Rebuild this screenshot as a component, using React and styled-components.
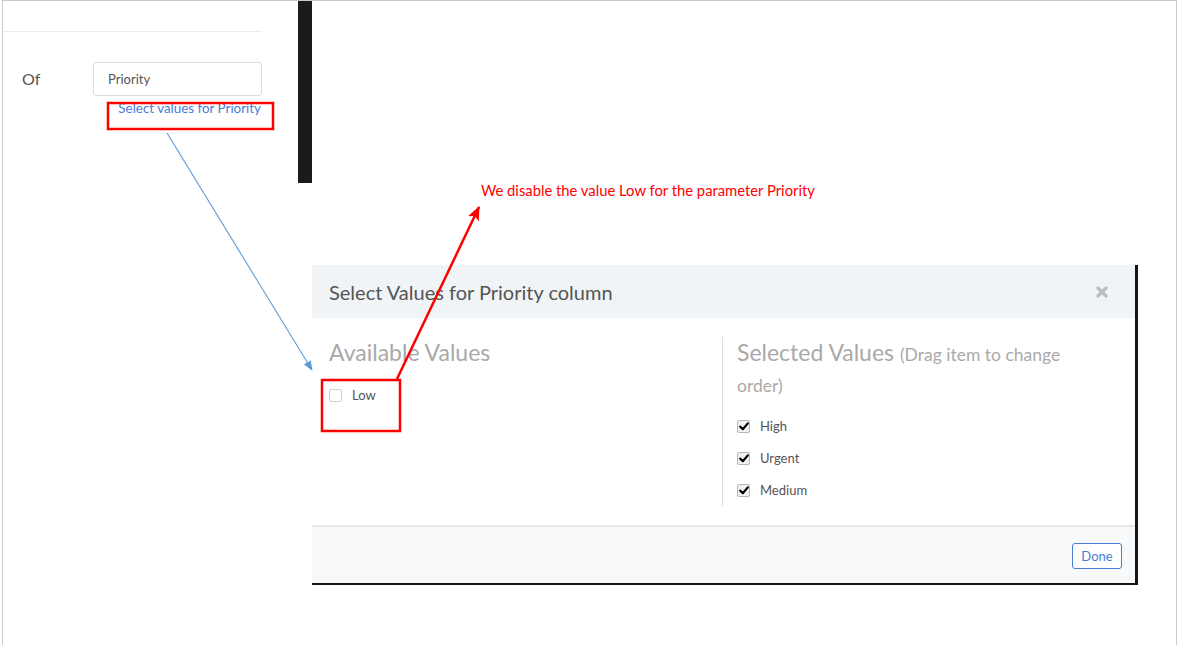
import React from "react";
import styled, { createGlobalStyle } from "styled-components";

const Global = createGlobalStyle`
  html, body { margin: 0; padding: 0; background: #fff; }
  body { font-family: Lato, "Noto Sans", sans-serif; }
  * { box-sizing: border-box; }
`;

const Page = styled.div`
  position: relative;
  width: 1179px;
  height: 645px;
  overflow: hidden;
  background: #fff;
`;

const Frame = styled.div`
  margin-left: 2px;
  width: 1175px;
  height: 645px;
  border: 1px solid #c9c9c9;
  border-bottom: none;
  display: flex;
  flex-direction: column;
`;

const TopRow = styled.div`
  display: flex;
  height: 182px;
`;

const LeftPanel = styled.div`
  width: 295px;
  display: flex;
  flex-direction: column;
`;

const TopRule = styled.div`
  width: 259px;
  height: 31px;
  border-bottom: 1px solid #ececec;
`;

const FieldRow = styled.div`
  display: flex;
  align-items: flex-start;
  margin-top: 30px;
  padding-left: 19px;
`;

const FieldLabel = styled.span`
  width: 71px;
  font-size: 16px;
  line-height: 33px;
  color: #555;
`;

const FieldColumn = styled.div`
  display: flex;
  flex-direction: column;
  width: 169px;
`;

const TextInput = styled.div`
  height: 34px;
  border: 1px solid #dcdcdc;
  border-radius: 3px;
  padding-left: 14px;
  display: flex;
  align-items: center;
  font-size: 13px;
  color: #555;
`;

const FieldLink = styled.a`
  margin-top: 4px;
  align-self: flex-end;
  padding-right: 1px;
  font-size: 13.4px;
  color: #4a7bd6;
  text-decoration: none;
`;

const BlackBar = styled.div`
  width: 14px;
  height: 182px;
  background: #1b1b1b;
`;

const Modal = styled.div`
  margin-top: 82px;
  margin-left: 309px;
  width: 826px;
  display: flex;
  flex-direction: column;
  background: #fff;
  border-right: 3px solid #141414;
  border-bottom: 2px solid #141414;
`;

const ModalHeader = styled.div`
  height: 53px;
  background: #f0f4f7;
  display: flex;
  align-items: center;
  justify-content: space-between;
  padding: 0 27px 0 17px;
`;

const ModalTitle = styled.span`
  font-size: 20px;
  color: #555;
`;

const CloseIcon = styled.svg`
  width: 12px;
  height: 12px;
`;

const ModalBody = styled.div`
  display: flex;
  padding: 19px 0 19px 0;
`;

const Column = styled.div`
  display: flex;
  flex-direction: column;
  width: ${(p) => p.$w};
  padding-left: ${(p) => p.$pad};
  border-left: ${(p) => (p.$divider ? "1px solid #dedede" : "none")};
`;

const ColumnHeading = styled.div`
  font-size: 23px;
  line-height: 31px;
  color: #a9a9a9;
  max-width: 345px;
  margin-bottom: 11px;
`;

const HeadingNote = styled.span`
  font-size: 17.5px;
  line-height: 1;
`;

const ItemRow = styled.label`
  display: flex;
  align-items: center;
  height: 32px;
  gap: 10px;
  font-size: 13px;
  color: #555;
`;

const Box = styled.span`
  width: 13px;
  height: 13px;
  border: 1px solid ${(p) => (p.$checked ? "#b5b5b5" : "#d0d0d0")};
  border-radius: 2px;
  background: ${(p) => (p.$checked ? "#f2f2f2" : "#fff")};
  display: flex;
  align-items: center;
  justify-content: center;
`;

const ModalFooter = styled.div`
  height: 58px;
  border-top: 2px solid #e7e7e7;
  background: #f8f9fb;
  display: flex;
  align-items: center;
  justify-content: flex-end;
  padding-right: 13px;
  padding-top: 2px;
`;

const DoneButton = styled.button`
  width: 50px;
  height: 26px;
  border: 1px solid #4a7bd6;
  border-radius: 3px;
  background: #fff;
  color: #4a7bd6;
  font-family: Lato, sans-serif;
  font-size: 13px;
  padding: 0;
`;

const Overlay = styled.svg`
  position: absolute;
  left: 0;
  top: 0;
  width: 1179px;
  height: 645px;
  pointer-events: none;
`;

const Annotation = styled.span`
  position: absolute;
  left: 481px;
  top: 181px;
  font-family: Lato, sans-serif;
  font-size: 14.8px;
  line-height: 18px;
  color: #ff0000;
`;

function Check({ checked }) {
  return (
    <Box $checked={checked}>
      {checked && (
        <svg width="10" height="9" viewBox="0 0 10 9">
          <path d="M1.2 4.6 L3.8 7.2 L8.8 1.4" fill="none" stroke="#000" strokeWidth="2.2" strokeLinecap="round" strokeLinejoin="round" />
        </svg>
      )}
    </Box>
  );
}

function Item({ label, checked }) {
  return (
    <ItemRow>
      <Check checked={checked} />
      {label}
    </ItemRow>
  );
}

export default function App() {
  return (
    <Page>
      <Global />
      <Frame>
        <TopRow>
          <LeftPanel>
            <TopRule />
            <FieldRow>
              <FieldLabel>Of</FieldLabel>
              <FieldColumn>
                <TextInput>Priority</TextInput>
                <FieldLink>Select values for Priority</FieldLink>
              </FieldColumn>
            </FieldRow>
          </LeftPanel>
          <BlackBar />
        </TopRow>
        <Modal>
          <ModalHeader>
            <ModalTitle>Select Values for Priority column</ModalTitle>
            <CloseIcon viewBox="0 0 12 12">
              <path d="M2 2 L10 10 M10 2 L2 10" stroke="#bdbdbd" strokeWidth="3.2" strokeLinecap="round" />
            </CloseIcon>
          </ModalHeader>
          <ModalBody>
            <Column $w="410px" $pad="17px">
              <ColumnHeading>Available Values</ColumnHeading>
              <Item label="Low" />
            </Column>
            <Column $w="410px" $pad="14px" $divider>
              <ColumnHeading>
                Selected Values <HeadingNote>(Drag item to change order)</HeadingNote>
              </ColumnHeading>
              <Item label="High" checked />
              <Item label="Urgent" checked />
              <Item label="Medium" checked />
            </Column>
          </ModalBody>
          <ModalFooter>
            <DoneButton>Done</DoneButton>
          </ModalFooter>
        </Modal>
      </Frame>
      <Overlay viewBox="0 0 1179 645">
        <defs>
          <marker id="blueHead" markerWidth="10" markerHeight="8" refX="9" refY="4" orient="auto" markerUnits="userSpaceOnUse">
            <path d="M0 0 L10 4 L0 8 Z" fill="#5b9bd5" />
          </marker>
          <marker id="redHead" markerWidth="14" markerHeight="12" refX="13" refY="6" orient="auto" markerUnits="userSpaceOnUse">
            <path d="M0 0 L14 6 L0 12 L3 6 Z" fill="#ff0000" />
          </marker>
        </defs>
        <rect x="108" y="103" width="165" height="26" fill="none" stroke="#ff0000" strokeWidth="2.5" />
        <rect x="322" y="380" width="78" height="51" fill="none" stroke="#ff0000" strokeWidth="2.5" />
        <line x1="167" y1="133" x2="312" y2="370" stroke="#5b9bd5" strokeWidth="1.1" markerEnd="url(#blueHead)" />
        <line x1="397" y1="379" x2="479" y2="207" stroke="#ff0000" strokeWidth="2.5" markerEnd="url(#redHead)" />
      </Overlay>
      <Annotation>We disable the value Low for the parameter Priority</Annotation>
    </Page>
  );
}
